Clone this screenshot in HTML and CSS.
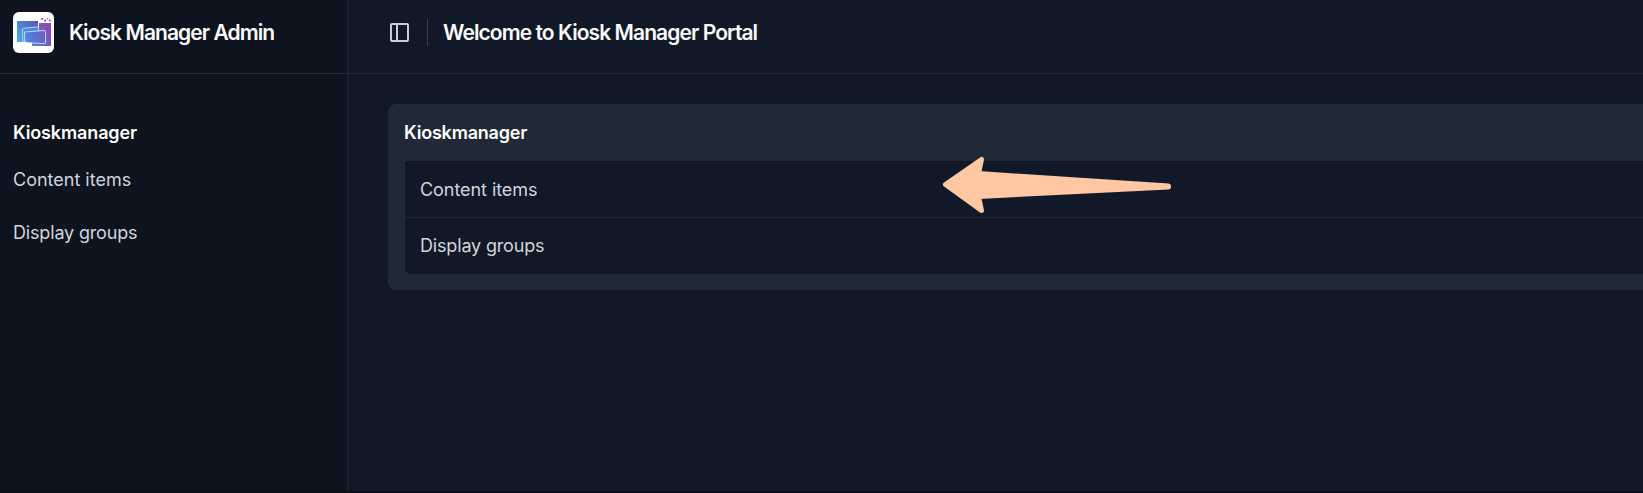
FILE: index.html
```html
<!DOCTYPE html>
<html lang="en">
<head>
<meta charset="utf-8">
<title>Kiosk Manager Admin</title>
<link rel="stylesheet" href="styles.css">
</head>
<body>
<div class="app">
  <aside class="sidebar">
    <div class="brand">
      <svg class="logo" viewBox="0 0 41 41" aria-hidden="true">
        <defs>
          <linearGradient id="g" gradientUnits="userSpaceOnUse" x1="4" y1="30" x2="37" y2="12">
            <stop offset="0" stop-color="#43a9ee"/>
            <stop offset=".5" stop-color="#5870d2"/>
            <stop offset="1" stop-color="#9345ab"/>
          </linearGradient>
          <linearGradient id="b" gradientUnits="userSpaceOnUse" x1="4" y1="29" x2="26" y2="9">
            <stop offset="0" stop-color="#41b1f1"/>
            <stop offset="1" stop-color="#5a50b4"/>
          </linearGradient>
        </defs>
        <rect width="41" height="41" rx="6" fill="#fff"/>
        <path d="M4 9H25V30H4Z" fill="url(#b)"/>
        <path d="M26 11H38V34H19V31L26 30Z" fill="url(#g)"/>
        <path d="M25 15H27V19H25Z" fill="url(#g)"/>
        <path d="M9.500 17.500Q9.500 16.500 10.500 16.300L25.500 14.800V20L12 21V30H10Z" fill="#4d86dc" stroke="#c9e0fa" stroke-width=".9"/>
        <path d="M11.500 20L31 18.500Q32.600 18.300 32.600 20V30Q32.600 31.800 31 31.700L13 30.500Q11.800 30.300 11.700 29Z" fill="url(#g)" stroke="#c9e0fa" stroke-width=".9"/>
        <path d="M4 30H10L19 31.500V34H4Z" fill="#fff"/>
        <g fill="#ad3d8c"><circle cx="29" cy="7" r="1.100"/><circle cx="32.200" cy="8.600" r="1.100"/><circle cx="34.600" cy="6.500" r=".8"/><circle cx="36.800" cy="8.500" r="1.100"/></g>
      </svg>
      <span class="title brand-title">Kiosk Manager Admin</span>
    </div>
    <nav class="nav">
      <h2 class="section-title">Kioskmanager</h2>
      <a class="nav-link">Content items</a>
      <a class="nav-link nav-link-groups">Display groups</a>
    </nav>
  </aside>
  <main class="main">
    <header class="topbar">
      <svg class="toggle" viewBox="0 0 19 19" fill="none" stroke="#c7ced8" stroke-width="2" aria-hidden="true">
        <rect x="1" y="1" width="17" height="17" rx="1"/><path d="M7 1V18"/>
      </svg>
      <span class="divider"></span>
      <h1 class="title page-title">Welcome to Kiosk Manager Portal</h1>
    </header>
    <section class="card">
      <h2 class="section-title card-title">Kioskmanager</h2>
      <div class="rows">
        <a class="row">Content items</a>
        <a class="row row-groups">Display groups</a>
      </div>
    </section>
  </main>
  <svg class="pointer" viewBox="0 0 230 60" aria-hidden="true">
    <path d="M3.500 29.500L39.500 4.500L36.500 18.600L226.500 31V32L36.500 41.400L39.500 55.500Z" fill="#ffc8a3" stroke="#ffc8a3" stroke-width="5" stroke-linejoin="round"/>
  </svg>
</div>
</body>
</html>
```
FILE: styles.css
```css
* { box-sizing: border-box; }
body { margin: 0; background: #111827; color: #d1d5db; font-family: Inter, sans-serif; font-size: 18px; line-height: 26px; }
h1, h2 { margin: 0; }
.app { position: relative; display: flex; width: 100%; height: 100vh; overflow: hidden; border-bottom: 2px solid #0b0f1c; }
.sidebar { flex: 0 0 348px; background: #0d131f; border-right: 1px solid #1b2331; }
.brand { display: flex; align-items: center; height: 74px; padding: 0 13px 9px; gap: 15px; border-bottom: 1px solid #1f2937; }
.logo { width: 41px; height: 41px; flex: none; }
.title { padding-top: 2px; color: #f9fafb; font-size: 21px; font-weight: 600; line-height: 28px; white-space: nowrap; }
.brand-title { letter-spacing: -.93px; }
.page-title { letter-spacing: -.92px; }
.nav { display: flex; flex-direction: column; padding: 46px 13px 0; }
.section-title { color: #fff; font-size: 18px; font-weight: 600; line-height: 26px; letter-spacing: -.13px; }
.nav-link { margin-top: 21px; height: 32px; }
.nav-link-groups { letter-spacing: -.17px; }
.main { flex: 1; min-width: 0; }
.topbar { display: flex; align-items: center; height: 74px; padding: 0 0 9px 42px; border-bottom: 1px solid #1f2937; }
.toggle { width: 19px; height: 19px; flex: none; }
.divider { width: 1px; height: 27px; margin: 0 15px 0 18px; background: #374151; }
.card { margin: 30px 0 0 40px; padding: 0 0 16px 17px; background: #1f2937; border-radius: 8px 0 0 8px; }
.card-title { margin-left: -1px; padding: 16px 0 15px; letter-spacing: -.2px; }
.rows { background: #111827; border-bottom-left-radius: 6px; letter-spacing: -.06px; }
.row { display: flex; align-items: center; height: 56px; padding: 2px 0 0 15px; }
.row + .row { height: 57px; padding-top: 0; border-top: 1px solid #1f2937; }
.row-groups { letter-spacing: -.17px; }
.pointer { position: absolute; left: 942px; top: 155px; width: 230px; height: 60px; }
```
